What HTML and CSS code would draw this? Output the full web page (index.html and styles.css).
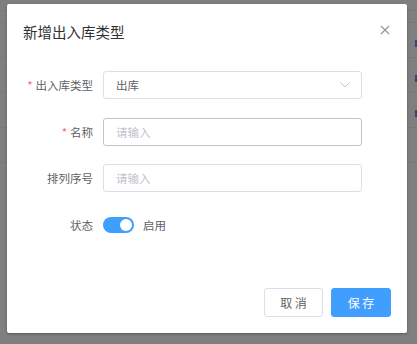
FILE: index.html
```html
<!DOCTYPE html>
<html lang="zh-CN">
<head>
  <meta charset="UTF-8"/>
  <title>新增出入库类型</title>
  <link rel="stylesheet" href="styles.css">
</head>
<body>
  <!-- page behind the mask -->
  <div class="page">
    <div class="row row-top"></div>
    <div class="row row-head"></div>
    <div class="row"><span class="mark"></span></div>
    <div class="row"><span class="mark"></span></div>
    <div class="row"><span class="mark"></span></div>
    <div class="row"></div>
  </div>

  <div class="mask">
    <div class="dialog">
      <div class="dialog-header">
        <span class="dialog-title">新增出入库类型</span>
        <button class="dialog-close" aria-label="关闭">
          <svg width="10" height="10" viewBox="0 0 10 10"><path d="M1 1L9 9M9 1L1 9" stroke="#909399" stroke-width="1.1" fill="none"/></svg>
        </button>
      </div>

      <form class="dialog-body">
        <div class="form-item">
          <label class="form-label"><span class="req">*</span>出入库类型</label>
          <div class="select">
            <span class="select-value">出库</span>
            <svg class="select-arrow" width="12" height="8" viewBox="0 0 12 8"><path d="M1.5 1.5L6 6L10.5 1.5" stroke="#c0c4cc" stroke-width="1" fill="none"/></svg>
          </div>
        </div>
        <div class="form-item">
          <label class="form-label"><span class="req">*</span>名称</label>
          <input class="input input-hover" type="text" placeholder="请输入"/>
        </div>
        <div class="form-item">
          <label class="form-label">排列序号</label>
          <input class="input" type="text" placeholder="请输入"/>
        </div>
        <div class="form-item">
          <label class="form-label">状态</label>
          <div class="switch-wrap">
            <span class="switch"><span class="switch-knob"></span></span>
            <span class="switch-text">启用</span>
          </div>
        </div>
      </form>

      <div class="dialog-footer">
        <button class="btn">取 消</button>
        <button class="btn btn-primary">保 存</button>
      </div>
    </div>
  </div>
</body>
</html>
```

FILE: styles.css
```css
*, *::before, *::after { box-sizing: border-box; }

body {
  margin: 0;
  font-family: "Noto Sans CJK SC", "Noto Sans", sans-serif;
  background: #fff;
  width: 417px; height: 344px;
  overflow: hidden;
  position: relative;
}

/* Page behind the mask */
.page { padding-top: 10px; }
.row {
  height: 35px;
  border-bottom: 1px solid #f0f2f5;
  position: relative;
}
.row-top { height: 1px; }
.row-head { height: 12px; }
.mark {
  position: absolute;
  right: 0; top: 17px;
  width: 2px; height: 7px;
  background: #409eff;
}

/* Mask + dialog */
.mask {
  position: absolute;
  inset: 0;
  background: rgba(0, 0, 0, .5);
}
.dialog {
  position: absolute;
  left: 7px; top: 4px;
  width: 400px; height: 329px;
  background: #fff;
  border-radius: 2px;
  box-shadow: 0 1px 3px rgba(0, 0, 0, .3);
  display: flex;
  flex-direction: column;
}
.dialog-header {
  display: flex;
  align-items: center;
  justify-content: space-between;
  padding: 16px 17px 0 16px;
  height: 36px;
}
.dialog-title {
  font-size: 14.5px;
  line-height: 20px;
  color: #303133;
  margin-top: 4px;
}
.dialog-close {
  border: none; background: none;
  padding: 0; cursor: pointer;
  width: 10px; height: 10px;
  display: flex;
}

/* Form */
.dialog-body {
  margin: 0;
  padding: 31px 45px 0 16px;
  flex: 1;
}
.form-item {
  display: flex;
  align-items: center;
  height: 28px;
  margin-bottom: 18.6px;
}
.form-label {
  width: 80px;
  padding-right: 10px;
  text-align: right;
  font-size: 11.5px;
  color: #606266;
  flex-shrink: 0;
}
.req { color: #f56c6c; margin-right: 3px; }

.input, .select {
  width: 259px; height: 28px;
  border: 1px solid #dcdfe6;
  border-radius: 3px;
  padding: 0 12px;
  font: inherit;
  font-size: 11.5px;
  color: #606266;
  background: #fff;
  outline: none;
}
.input::placeholder { color: #c0c4cc; }
.input-hover { border-color: #c0c4cc; }
.select {
  display: flex;
  align-items: center;
  justify-content: space-between;
}
.select-arrow { margin-right: -2px; }

.switch-wrap { display: flex; align-items: center; }
.switch {
  width: 31px; height: 16px;
  border-radius: 8px;
  background: #409eff;
  position: relative;
  display: inline-block;
}
.switch-knob {
  position: absolute;
  top: 2px; right: 2px;
  width: 12px; height: 12px;
  border-radius: 50%;
  background: #fff;
}
.switch-text {
  margin-left: 9px;
  font-size: 11.5px;
  color: #606266;
}

/* Footer */
.dialog-footer {
  display: flex;
  justify-content: flex-end;
  gap: 8px;
  padding: 0 16px 16px;
}
.btn {
  width: 59px; height: 29px;
  border: 1px solid #dcdfe6;
  border-radius: 3px;
  background: #fff;
  color: #606266;
  font: inherit;
  font-size: 12px;
  padding: 0;
  cursor: pointer;
}
.btn-primary {
  width: 60px;
  background: #409eff;
  border-color: #409eff;
  color: #fff;
}
```
